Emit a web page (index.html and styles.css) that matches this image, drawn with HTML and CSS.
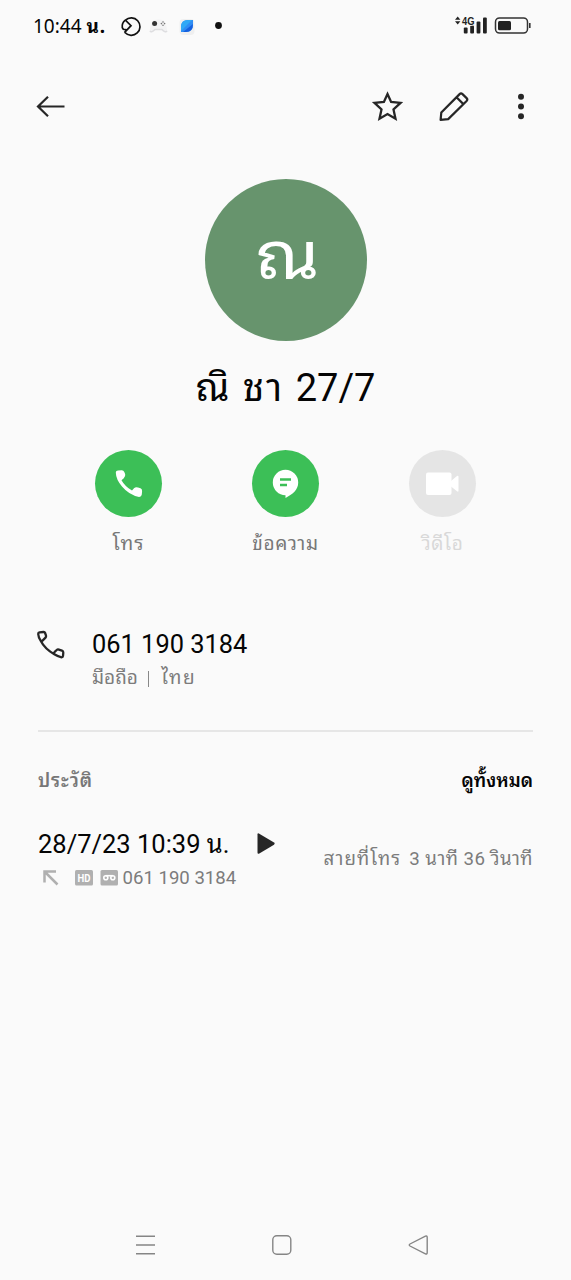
FILE: index.html
```html
<!DOCTYPE html>
<html lang="th">
<head>
<meta charset="utf-8">
<title>ณิ ชา 27/7</title>
<link rel="stylesheet" href="styles.css">
</head>
<body>
<div class="screen">
  <div class="status">
    <span class="clock">10:44 <span class="clock-unit">น.</span></span>
    <svg class="notices" width="106" height="24" viewBox="0 0 106 24">
      <g fill="none" stroke="#111" stroke-width="1.7"><path d="M5.4 6.200A8.700 8.700 0 1 1 4.900 18.500"/><path d="M5.400 6.200L11 11.700L4.400 18.600M5.200 6.100Q1.600 9 2.300 13.600L3.300 15.300L6.700 15.800"/></g>
      <path d="M33 6.500Q38 4.500 44 6.500Q47 12 47.500 18Q45 20 42 16H35Q32 20 29.500 18Q30 11 33 6.500Z" fill="#f3f3f4"/>
      <path d="M30 17Q31.500 19 35 15.500H42Q45 19 47 17" fill="none" stroke="#dedee0" stroke-width="1.500"/>
      <circle cx="34.600" cy="9.600" r="2.500" fill="#333"/><g fill="#777"><circle cx="43" cy="8" r=".8"/><circle cx="43" cy="11.200" r=".8"/><circle cx="41.400" cy="9.600" r=".8"/><circle cx="44.600" cy="9.600" r=".8"/></g>
      <rect x="59.500" y="5" width="15" height="16" rx="4" fill="#efefef"/>
      <path d="M61 17V13Q61 6 68 6H73V10Q73 18 66 18H61Z" fill="#2f8df4"/><path d="M61 17V13Q61 6 68 6H72Z" fill="#30a9f6"/><path d="M63 18L73 10Q73 18 66 18Z" fill="#1560df"/>
      <circle cx="98.500" cy="11.500" r="3.400" fill="#111"/>
    </svg>
    <svg class="signal" width="78" height="24" viewBox="0 0 78 24">
      <path d="M1 5.800L3.700 2.500L6.400 5.800ZM1 7.300L3.700 10.600L6.400 7.300Z" fill="#222"/>
      <g fill="#222"><rect x="9.800" y="13.500" width="3.800" height="6" rx="1"/><rect x="16.200" y="11.500" width="3.800" height="8" rx="1"/><rect x="22.600" y="7.500" width="3.800" height="12" rx="1"/><rect x="29" y="3.500" width="3.800" height="16" rx="1"/></g>
      <text x="8" y="10.500" class="net" textLength="12.500" lengthAdjust="spacingAndGlyphs">4G</text>
      <rect x="41.500" y="3.900" width="32" height="15.200" rx="4" fill="none" stroke="#333" stroke-width="1.500"/><rect x="44" y="7" width="13" height="9.200" rx="1.500" fill="#222"/><path d="M75.800 9V14" stroke="#333" stroke-width="1.600"/>
    </svg>
  </div>

  <div class="toolbar">
    <svg width="30" height="24" viewBox="0 0 30 24" fill="none" stroke="#262626" stroke-width="2.200"><path d="M28.500 12.500H2M12 2.700L2 12.500L12 22.300"/></svg>
    <div class="tools">
      <svg width="32" height="32" viewBox="0 0 32 32" fill="none" stroke="#262626" stroke-width="2.300"><path d="M16.500 4L20.100 12L29.500 12.900L22.500 19.400L24.500 28.800L16.500 24.100L8.500 28.800L10.500 19.400L3.500 12.900L12.900 12Z"/></svg>
      <svg width="32" height="32" viewBox="0 0 32 32" fill="none" stroke="#262626" stroke-width="2.200" stroke-linejoin="round"><path d="M2.600 29.900L3.300 22.500L21.600 4.100Q23 2.700 24.500 4.100L28.600 8.100Q30 9.500 28.600 11L10.200 29.100ZM18.500 7.300L25.400 14.100"/></svg>
      <svg width="32" height="32" viewBox="0 0 32 32" fill="#262626"><circle cx="16" cy="6.700" r="3"/><circle cx="16" cy="16.500" r="3"/><circle cx="16" cy="26.300" r="3"/></svg>
    </div>
  </div>

  <div class="avatar"><span>ณ</span></div>
  <h1 class="name"><span class="name-thai">ณิ ชา </span>27/7</h1>

  <div class="actions">
    <div class="action">
      <div class="disc"><svg width="67" height="67" viewBox="0 0 67 67"><path fill="#fff" d="M20.800 22.500Q20.800 20.700 23 20.500L26.500 20.200Q28.500 20 29.300 22L30.200 24.300Q30.600 26.500 28.800 28.200L26.500 30.200Q30 36.500 37 40.500L39 38.200Q40.500 36.800 43 37.500L45.500 38.300Q47.200 39 47.100 41L46.800 44.500Q46.500 47 44 46.900Q34 45 27 36.500Q21 29.500 20.800 22.500Z"/></svg></div>
      <span class="label call">โทร</span>
    </div>
    <div class="action">
      <div class="disc"><svg width="67" height="67" viewBox="0 0 67 67"><path fill="#fff" d="M33.500 19.800A12.800 12.800 0 0 1 46.200 32.600C46.200 40 40.500 44.500 33.500 48V45.200A12.700 12.700 0 0 1 33.500 19.800Z"/><path d="M28 29.500H39M28 35H35" stroke="#3cbf57" stroke-width="2.600"/></svg></div>
      <span class="label message">ข้อความ</span>
    </div>
    <div class="action off">
      <div class="disc"><svg width="67" height="67" viewBox="0 0 67 67" fill="#fff"><rect x="17" y="22.500" width="25.500" height="22.500" rx="2"/><path d="M42 31L48 26Q49.500 25 49.500 27V40.500Q49.500 42.500 48 41.300L42 36.500Z"/></svg></div>
      <span class="label video">วิดีโอ</span>
    </div>
  </div>

  <div class="phone">
    <svg width="30" height="30" viewBox="0 0 30 30" fill="none" stroke="#262626" stroke-width="2.300" stroke-linejoin="round"><path d="M4.800 11Q2.300 7 2.200 4Q2.200 2.600 3.500 2.400L7.500 2Q8.700 1.900 9.100 3L10 5.600Q10.300 6.800 9.500 7.700L6.800 10.300Q5.500 11.500 4.800 11Q9 19 18.300 24.200Q17.500 23 18.700 21.800L20.700 20Q21.600 19.200 22.800 19.600L26 20.700Q27.400 21.200 27.300 22.600L27 26Q26.900 27.300 25.600 27.300Q22 26.500 18.300 24.200"/></svg>
    <div>
      <div class="number">061 190 3184</div>
      <div class="kind"><span class="mobile">มือถือ</span><i></i><span class="country">ไทย</span></div>
    </div>
  </div>

  <div class="history-head"><span class="history">ประวัติ</span><span class="all">ดูทั้งหมด</span></div>

  <div class="entry">
    <div class="entry-main">
      <div class="date"><span>28/7/23 10:39 <span class="nor">น.</span></span><svg width="20" height="24" viewBox="0 0 20 24"><path d="M1.500 2.500V20.500Q1.500 22.500 3.300 21.500L18 12.800Q19.500 11.700 18 10.600L3.300 1.700Q1.500 .7 1.500 2.500Z" fill="#262626"/></svg></div>
      <div class="detail">
        <svg width="80" height="18" viewBox="0 0 80 18"><path d="M6.500 13.500V2.500H18M7.500 3.500L19.500 15.500" fill="none" stroke="#b0b0b0" stroke-width="2.500"/><rect x="37" y="1" width="18" height="15.500" rx="1.500" fill="#b0b0b0"/><text x="39.500" y="12.600" class="hd" textLength="13" lengthAdjust="spacingAndGlyphs">HD</text><rect x="62.500" y="1" width="17.500" height="15.500" rx="1.500" fill="#b0b0b0"/><g fill="none" stroke="#fff" stroke-width="1.600"><circle cx="67.800" cy="8.700" r="2"/><circle cx="74.800" cy="8.700" r="2"/><path d="M67.500 6.700H75"/></g></svg>
        <span>061 190 3184</span>
      </div>
    </div>
    <div class="duration"><span class="outgoing">สายที่โทร</span><span class="length">3 นาที 36 วินาที</span></div>
  </div>

  <div class="navbar">
    <svg width="24" height="24" viewBox="0 0 24 24" fill="none" stroke="#858585" stroke-width="1.500"><path d="M3 3.200H22M3 12H22M3 20.800H22"/></svg>
    <svg width="24" height="24" viewBox="0 0 24 24" fill="none" stroke="#858585" stroke-width="1.400"><rect x="2.800" y="2.800" width="18" height="18.400" rx="4"/></svg>
    <svg width="24" height="24" viewBox="0 0 24 24" fill="none" stroke="#858585" stroke-width="1.400"><path d="M4 11L19.400 3.200Q21.200 2.500 21.200 4.500V19.500Q21.200 21.500 19.400 20.800L4 13Q2.500 12 4 11Z"/></svg>
  </div>
</div>
</body>
</html>
```
FILE: styles.css
```css
* { box-sizing: border-box; }
body { margin: 0; background: #fafafa; }
svg { display: block; flex: none; }
.screen {
  width: 571px; height: 1280px; display: flex; flex-direction: column;
  background: #fafafa; color: #050505; white-space: nowrap; overflow: hidden;
  font-family: Roboto, "Noto Sans Thai Looped", "Noto Looped Thai", Loma, Waree, Umpush, Garuda, "Droid Sans Thai", Tahoma, sans-serif;
}
.status { height: 52px; padding: 0 39px 0 33px; display: flex; align-items: center; flex: none; }
.clock { width: 87px; font: 450 19px/24px "Noto Sans", "Noto Sans Thai Looped", Loma, Waree, sans-serif; }
.clock-unit { font-weight: 700; letter-spacing: 0.8px; }
.signal { margin-left: auto; }
.net { font: 700 11px "Liberation Sans", sans-serif; fill: #222; stroke: #fafafa; stroke-width: 1.5px; paint-order: stroke; }
.toolbar { height: 108px; padding: 0 34px 0 36px; display: flex; align-items: center; justify-content: space-between; flex: none; }
.tools { display: flex; gap: 35px; }
.avatar {
  width: 162px; height: 162px; margin: 19px auto 0 205px; border-radius: 50%; flex: none;
  background: #67946d; color: #fff; font-size: 67px; line-height: 155px; text-align: center;
}
.avatar span { display: inline-block; margin-left: 3px; transform: scaleX(1.09); }
.name { height: 46px; margin: 24px 0 0; font-size: 38px; line-height: 46px; font-weight: 400; text-align: center; }
.name-thai { font-size: 38.500px; letter-spacing: 1.900px; }
.actions { display: flex; gap: 90px; margin: 39px 0 0 95px; height: 120px; }
.action { width: 67px; display: flex; flex-direction: column; align-items: center; }
.disc { width: 67px; height: 67px; border-radius: 50%; background: #3cbf57; }
.off .disc { background: #e5e5e5; }
.label { margin-top: 15px; font-size: 19px; line-height: 24px; color: #777; }
.off .label { color: #d8d8d8; }
.call { font-size: 19.500px; letter-spacing: 1px; }
.message { letter-spacing: 0.700px; }
.video { letter-spacing: 0.600px; }
.phone { display: flex; align-items: flex-start; gap: 26px; margin: 59px 38px 0 36px; height: 101px; flex: none; }
.number { font-size: 25.400px; line-height: 30px; }
.phone > svg { margin-top: 1px; }
.kind { display: flex; align-items: center; height: 24px; margin-top: 7px; font-size: 19px; line-height: 24px; color: #7c7c7c; }
.kind i { width: 1.500px; height: 16px; margin: 1px 12px 0 10px; background: #888; }
.country { letter-spacing: 1.400px; }
.history-head {
  display: flex; justify-content: space-between; margin: 0 38px; height: 97px; padding-top: 37px; flex: none;
  border-top: 2px solid #e6e6e6; font-size: 18.500px; line-height: 24px; font-weight: 600;
}
.history { color: #777; letter-spacing: 0.900px; }
.entry { display: flex; justify-content: space-between; align-items: flex-start; margin: 0 38px; flex: none; }
.date { display: flex; align-items: center; justify-content: space-between; width: 238px; height: 34px; font-size: 25.500px; line-height: 34px; }
.detail { display: flex; align-items: center; gap: 4.500px; height: 24px; margin-top: 5px; font-size: 18.600px; line-height: 24px; color: #7c7c7c; }
.hd { font: 700 10.500px Roboto, sans-serif; fill: #fff; }
.duration { display: flex; gap: 8px; margin-top: 20px; font-size: 18.700px; line-height: 24px; color: #7c7c7c; }
.outgoing { letter-spacing: 1.100px; }
.length { letter-spacing: 0.450px; }
.navbar { display: flex; gap: 112.500px; margin: auto 0 23px 133px; flex: none; }
```
